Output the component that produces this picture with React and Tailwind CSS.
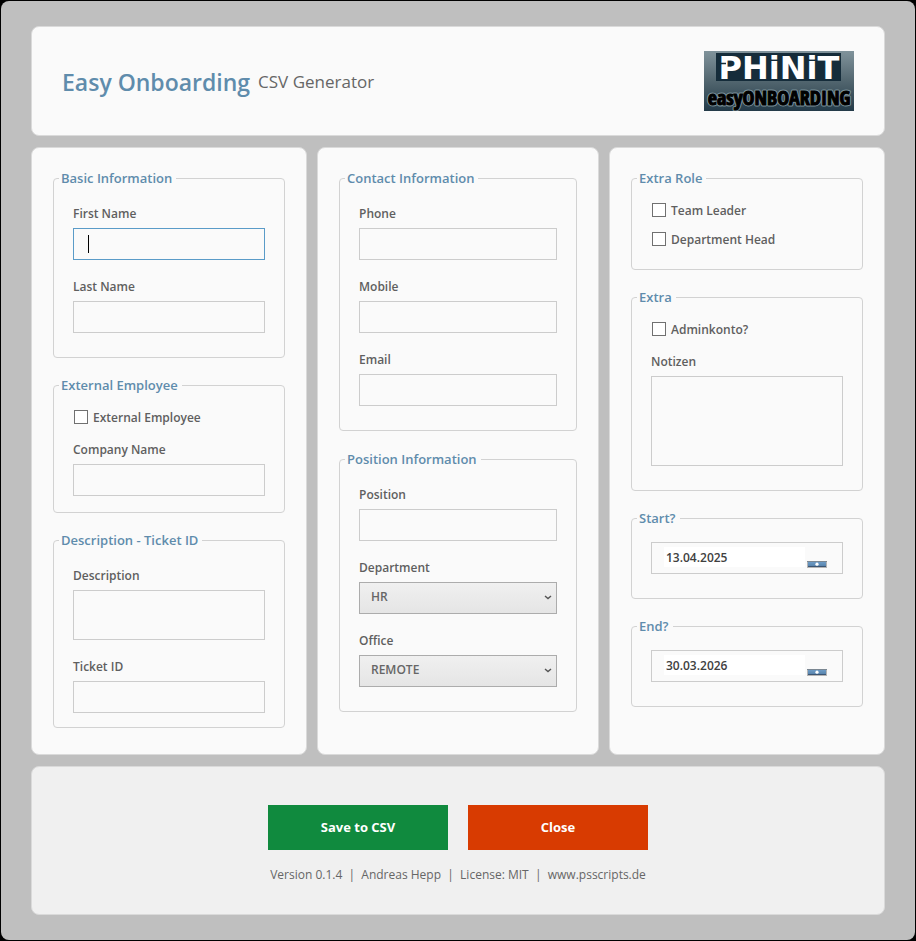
import { useId } from "react";

const INPUT =
  "block w-full border bg-[#fafafa] px-[14px] text-[12px] text-[#333333] outline-none";

function Group({ title, className, children }) {
  return (
    <fieldset className={`min-w-0 rounded-[4px] border border-[#d2d2d2] px-[19px] ${className}`}>
      <legend className="-ml-[14px] pr-1 pl-[2px] text-[13px] leading-5 font-semibold text-[#5f8cac]">
        {title}
      </legend>
      {children}
    </fieldset>
  );
}

function Field({ label, children }) {
  const id = useId();
  return (
    <div className="flex flex-col gap-1">
      <label htmlFor={id} className="text-[12px] leading-5 font-semibold text-[#5f5f5f]">
        {label}
      </label>
      {children(id)}
    </div>
  );
}

function TextField({ label, active }) {
  return (
    <Field label={label}>
      {(id) => (
        <div className="relative">
          <input
            id={id}
            type="text"
            className={`h-8 ${INPUT} ${active ? "border-[#5a9bc8]" : "border-[#cccccc]"}`}
          />
          {active && <span className="absolute top-[7px] left-[15px] h-[18px] w-px bg-black" />}
        </div>
      )}
    </Field>
  );
}

function AreaField({ label, height }) {
  return (
    <Field label={label}>
      {(id) => <textarea id={id} className={`resize-none border-[#cccccc] ${height} ${INPUT}`} />}
    </Field>
  );
}

function SelectField({ label, value }) {
  return (
    <Field label={label}>
      {(id) => (
        <div className="relative">
          <select
            id={id}
            defaultValue={value}
            className="block h-8 w-full appearance-none border border-[#acacac] bg-linear-to-b from-[#f0f0f0] to-[#e5e5e5] pr-6 pb-[3px] pl-[11px] text-[12px] font-semibold text-[#666666] outline-none"
          >
            <option>{value}</option>
          </select>
          <svg viewBox="0 0 8 5" className="pointer-events-none absolute top-[13px] right-[5px] h-[5px] w-2">
            <path d="M1 1 L4 3.6 L7 1" fill="none" stroke="#555555" strokeWidth="1.4" />
          </svg>
        </div>
      )}
    </Field>
  );
}

function Check({ label }) {
  return (
    <label className="flex h-5 items-center gap-[5px] pl-px text-[12px] leading-5 font-semibold text-[#5f5f5f]">
      <input type="checkbox" className="size-[14px] appearance-none border border-[#707070] bg-white" />
      <span className="pt-[2px]">{label}</span>
    </label>
  );
}

function DateBox({ label, value }) {
  return (
    <div className="flex h-8 items-start justify-between border border-[#cccccc] bg-[#fafafa] pt-1 pr-[15px] pl-3">
      <input
        type="text"
        aria-label={label}
        defaultValue={value}
        className="h-5 w-0 max-w-[141px] grow bg-white px-[2px] text-[12px] font-semibold text-[#404040] outline-none"
      />
      <button type="button" aria-label="Open calendar" className="mt-[13px]">
        <svg viewBox="0 0 20 8" className="h-2 w-5">
          <defs>
            <linearGradient id="cal" x1="0" y1="0" x2="0" y2="1">
              <stop offset="0" stopColor="#6d9bc6" />
              <stop offset="1" stopColor="#5580a8" />
            </linearGradient>
          </defs>
          <rect x="0" y="1" width="20" height="7" fill="#b5b5b5" />
          <rect x="0" y="1" width="20" height="1" fill="#7b8792" />
          <rect x="1" y="2" width="18" height="5" fill="url(#cal)" />
          <rect x="1" y="6" width="18" height="1" fill="#3c5674" />
          <circle cx="10" cy="4.2" r="1.6" fill="#ffffff" />
        </svg>
      </button>
    </div>
  );
}

function Logo() {
  return (
    <svg viewBox="0 0 150 60" className="h-[60px] w-[150px]" role="img" aria-label="PHiNiT easyONBOARDING">
      <defs>
        <linearGradient id="logo" x1="0" y1="0" x2="0" y2="1">
          <stop offset="0" stopColor="#80939b" />
          <stop offset="0.5" stopColor="#52666f" />
          <stop offset="1" stopColor="#233a48" />
        </linearGradient>
      </defs>
      <rect width="150" height="60" fill="url(#logo)" />
      <rect x="12" y="2" width="125" height="28" fill="#152c3a" />
      <text
        x="75"
        y="28"
        textAnchor="middle"
        fill="#ffffff"
        fontSize="32"
        fontWeight="700"
        fontFamily="'DejaVu Sans', sans-serif"
      >
        PHiNiT
      </text>
      <path d="M14 12.5h8" fill="none" stroke="#152c3a" strokeWidth="1.5" />
      <text
        x="75"
        y="54"
        textAnchor="middle"
        fill="none"
        stroke="#7b929b"
        strokeWidth="3"
        strokeLinejoin="round"
        fontSize="20"
        fontWeight="700"
        fontFamily="'Liberation Sans Narrow', 'Open Sans Condensed', sans-serif"
        aria-hidden="true"
      >
        easyONBOARDING
      </text>
      <text
        x="75"
        y="54"
        textAnchor="middle"
        fill="#000000"
        stroke="#000000"
        strokeWidth="1"
        fontSize="20"
        fontWeight="700"
        fontFamily="'Liberation Sans Narrow', 'Open Sans Condensed', sans-serif"
      >
        easyONBOARDING
      </text>
    </svg>
  );
}

const CARD = "rounded-[8px] border border-[#dadada] bg-[#fafafa]";
const COLUMN = `flex flex-col px-[21px] py-5 ${CARD}`;

export default function App() {
  return (
    <div className="min-h-screen bg-black p-px font-['Open_Sans',sans-serif]">
      <main className="flex min-h-[calc(100vh-2px)] flex-col gap-[11px] rounded-[8px] bg-[#bfbfbf] px-[30px] pt-[25px] pb-[25px]">
        <header className={`flex items-center justify-between px-[30px] py-6 ${CARD}`}>
          <div className="flex items-center gap-2 pt-[2px]">
            <h1 className="text-[23px] leading-8 font-semibold text-[#5f8cac]">Easy Onboarding</h1>
            <span className="text-[17px] leading-8 text-[#666666]">CSV Generator</span>
          </div>
          <Logo />
        </header>

        <form className="grid grow grid-cols-[276fr_282fr_276fr] gap-[10px]">
          <section className={`gap-[17px] ${COLUMN}`}>
            <Group title="Basic Information" className="pt-4 pb-6">
              <div className="flex flex-col gap-[17px]">
                <TextField label="First Name" active />
                <TextField label="Last Name" />
              </div>
            </Group>
            <Group title="External Employee" className="pt-3 pb-4">
              <div className="flex flex-col gap-[13px]">
                <Check label="External Employee" />
                <TextField label="Company Name" />
              </div>
            </Group>
            <Group title="Description - Ticket ID" className="pt-4 pb-[14px]">
              <div className="flex flex-col gap-[17px]">
                <AreaField label="Description" height="h-[50px]" />
                <TextField label="Ticket ID" />
              </div>
            </Group>
          </section>

          <section className={`gap-[18px] ${COLUMN}`}>
            <Group title="Contact Information" className="pt-4 pb-6">
              <div className="flex flex-col gap-[17px]">
                <TextField label="Phone" />
                <TextField label="Mobile" />
                <TextField label="Email" />
              </div>
            </Group>
            <Group title="Position Information" className="pt-4 pb-6">
              <div className="flex flex-col gap-[17px]">
                <TextField label="Position" />
                <SelectField label="Department" value="HR" />
                <SelectField label="Office" value="REMOTE" />
              </div>
            </Group>
          </section>

          <section className={`gap-[17px] ${COLUMN}`}>
            <Group title="Extra Role" className="pt-3 pb-5">
              <div className="flex flex-col gap-[9px]">
                <Check label="Team Leader" />
                <Check label="Department Head" />
              </div>
            </Group>
            <Group title="Extra" className="pt-3 pb-6">
              <div className="flex flex-col gap-[13px]">
                <Check label="Adminkonto?" />
                <AreaField label="Notizen" height="h-[90px]" />
              </div>
            </Group>
            <Group title="Start?" className="pt-[14px] pb-6">
              <DateBox label="Start date" value="13.04.2025" />
            </Group>
            <Group title="End?" className="pt-[14px] pb-6">
              <DateBox label="End date" value="30.03.2026" />
            </Group>
          </section>
        </form>

        <footer className="flex flex-col items-center gap-[15px] rounded-[8px] border border-[#dadada] bg-[#f0f0f0] pt-[38px] pb-[29px]">
          <div className="flex gap-5">
            <button type="button" className="h-[45px] w-[180px] bg-[#108a3e] text-[13px] font-bold text-white">
              Save to CSV
            </button>
            <button type="button" className="h-[45px] w-[180px] bg-[#d83b01] text-[13px] font-bold text-white">
              Close
            </button>
          </div>
          <p className="text-[12px] leading-5 whitespace-pre text-[#666666]">
            {"Version 0.1.4  |  Andreas Hepp  |  License: MIT  |  www.psscripts.de"}
          </p>
        </footer>
      </main>
    </div>
  );
}
